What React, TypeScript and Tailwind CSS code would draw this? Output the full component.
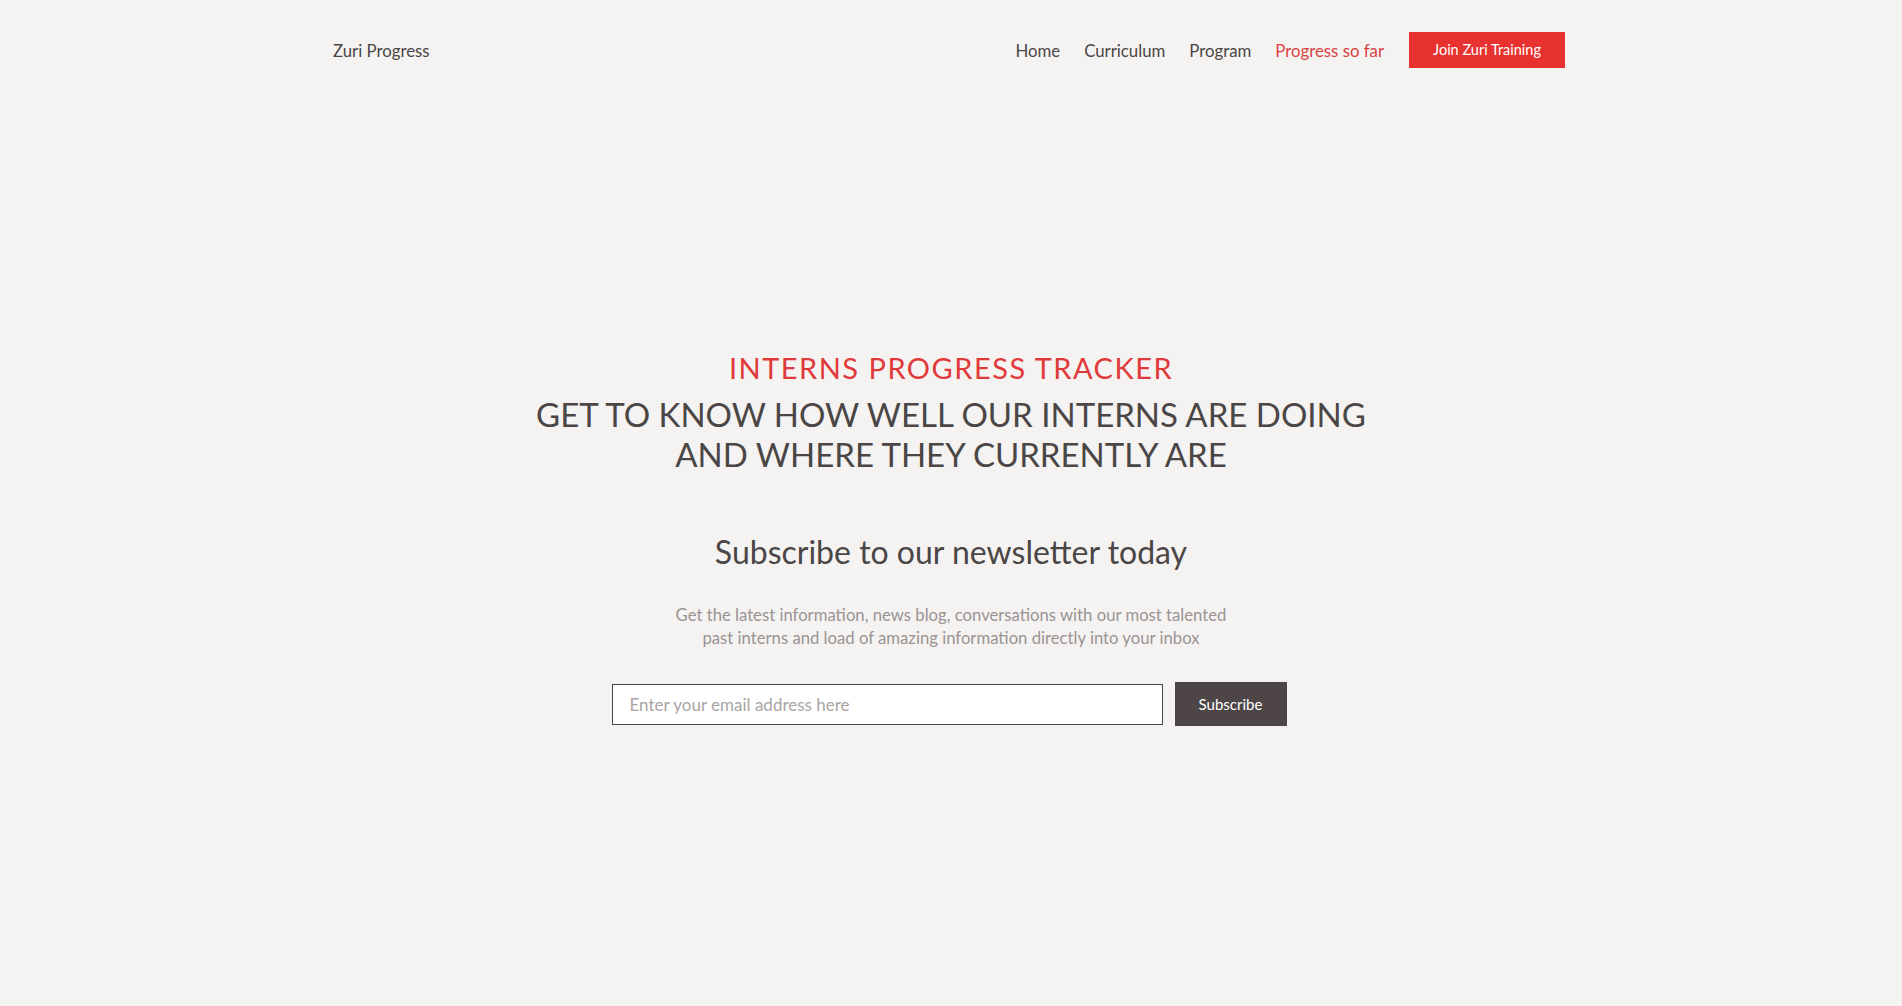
import React from "react";

export default function App() {
  const font = { fontFamily: "Lato, 'Noto Sans', 'Liberation Sans', sans-serif" };
  return (
    <div className="min-h-[1006px] w-full bg-[#f5f3f1] text-[#4a4646]" style={font}>
      <header className="mx-auto flex w-[1236px] items-center justify-between pt-[32px] pr-[4px]">
        <a className="pt-[1px] text-[16.8px] text-[#4a4646]">Zuri Progress</a>
        <nav className="flex items-center">
          <ul className="flex items-center gap-[24px] pt-[1px] text-[16.8px]">
            <li className="text-[#4a4646]">Home</li>
            <li className="text-[#4a4646]">Curriculum</li>
            <li className="text-[#4a4646]">Program</li>
            <li className="text-[#d9413f]">Progress so far</li>
          </ul>
          <button className="ml-[25px] h-[36px] w-[156px] bg-[#e8322f] text-[14.5px] text-white">
            Join Zuri Training
          </button>
        </nav>
      </header>

      <main className="flex flex-col items-center pt-[282px] text-center">
        <h2 className="text-[29px] leading-[36px] tracking-[1.5px] text-[#e0393a]">INTERNS PROGRESS TRACKER</h2>
        <h1 className="mt-[8px] text-[33px] leading-[40px] text-[#4a4646]">
          GET TO KNOW HOW WELL OUR INTERNS ARE DOING
          <br />
          AND WHERE THEY CURRENTLY ARE
        </h1>
        <h3 className="mt-[58px] text-[32px] leading-[40px] text-[#4a4646]">
          Subscribe to our newsletter today
        </h3>
        <p className="mt-[32px] text-[16.7px] leading-[23px] text-[#9a9393]">
          Get the latest information, news blog, conversations with our most talented
          <br />
          past interns and load of amazing information directly into your inbox
        </p>
        <form className="mt-[32px] flex items-center gap-[12px] pr-[4px]" onSubmit={(e) => e.preventDefault()}>
          <input
            type="email"
            placeholder="Enter your email address here"
            className="h-[41px] w-[551px] border border-[#4a4646] bg-white px-[17px] text-[17px] outline-none placeholder:text-[#aaa4a4]"
          />
          <button className="h-[44px] w-[112px] bg-[#4e4646] text-[15px] text-white">Subscribe</button>
        </form>
      </main>
    </div>
  );
}
